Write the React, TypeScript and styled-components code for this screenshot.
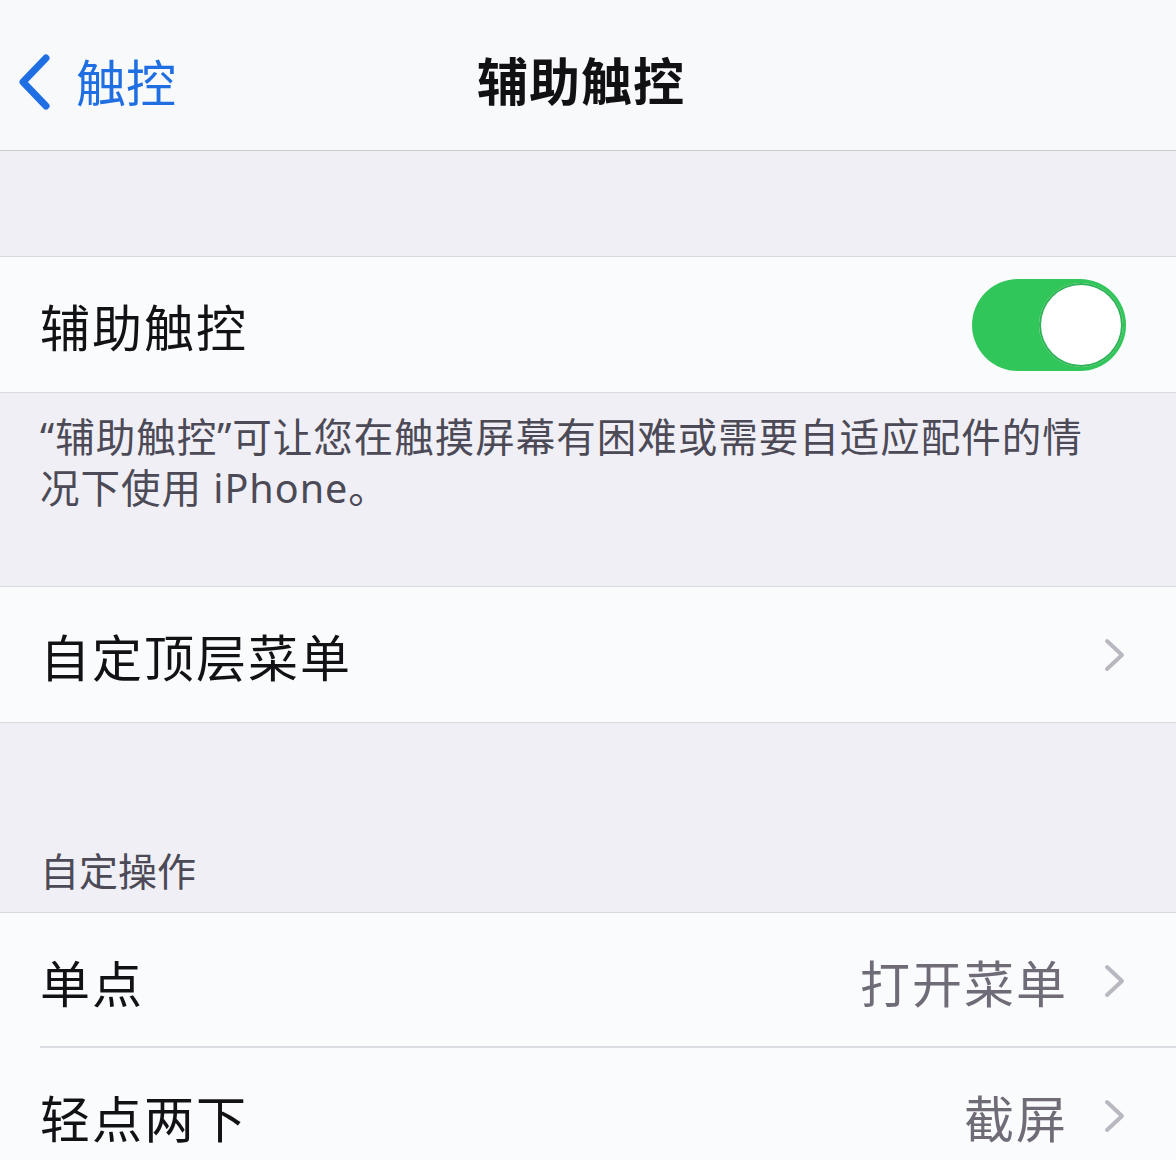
import styled, { createGlobalStyle } from 'styled-components';

const GlobalStyle = createGlobalStyle`
  html, body {
    margin: 0;
    padding: 0;
    background: #efeff5;
  }
  body {
    font-family: "Noto Sans CJK SC", "Noto Sans", sans-serif;
    -webkit-font-smoothing: antialiased;
  }
`;

const BackChevron = () => (
  <svg width="36" height="60" viewBox="0 0 36 60" fill="none">
    <path
      d="M30 6 L7 30 L30 54"
      stroke="#1f6fe3"
      strokeWidth="7"
      strokeLinecap="round"
      strokeLinejoin="round"
    />
  </svg>
);

const Chevron = () => (
  <svg width="22" height="34" viewBox="0 0 22 34" fill="none">
    <path
      d="M3 3 L18 17 L3 31"
      stroke="#b9b8c0"
      strokeWidth="4"
      strokeLinecap="round"
      strokeLinejoin="round"
    />
  </svg>
);

const Settings = () => {
  return (
    <Page>
      <GlobalStyle />
      <NavBar>
        <BackButton>
          <BackChevron />
          <span>触控</span>
        </BackButton>
        <NavTitle>辅助触控</NavTitle>
      </NavBar>

      <Spacer $height={105} />

      <Group>
        <Row>
          <RowLabel>辅助触控</RowLabel>
          <Toggle $on>
            <Knob />
          </Toggle>
        </Row>
      </Group>

      <Footer>
        “辅助触控”可让您在触摸屏幕有困难或需要自适应配件的情况下使用 iPhone。
      </Footer>

      <Group>
        <Row>
          <RowLabel>自定顶层菜单</RowLabel>
          <Accessory>
            <Chevron />
          </Accessory>
        </Row>
      </Group>

      <SectionHeader>自定操作</SectionHeader>

      <Group>
        <Row $divider>
          <RowLabel>单点</RowLabel>
          <Accessory>
            <RowValue>打开菜单</RowValue>
            <Chevron />
          </Accessory>
        </Row>
        <Row>
          <RowLabel>轻点两下</RowLabel>
          <Accessory>
            <RowValue>截屏</RowValue>
            <Chevron />
          </Accessory>
        </Row>
      </Group>
    </Page>
  );
};

const Page = styled.div`
  width: 1176px;
  height: 1160px;
  overflow: hidden;
  background: #efeff5;
  display: flex;
  flex-direction: column;
`;

const NavBar = styled.header`
  position: relative;
  flex: none;
  height: 150px;
  display: flex;
  align-items: center;
  justify-content: center;
  background: #f8f9fb;
  border-bottom: 1px solid #c9c9ce;
`;

const BackButton = styled.div`
  position: absolute;
  left: 16px;
  top: 52px;
  display: flex;
  align-items: center;
  gap: 24px;
  color: #1f6fe3;
  font-size: 50px;
  line-height: 60px;

  span {
    margin-top: -4px;
  }
`;

const NavTitle = styled.h1`
  margin: 8px 14px 0 0;
  font-size: 51px;
  font-weight: 700;
  color: #111114;
  letter-spacing: 1px;
`;

const Spacer = styled.div<{ $height: number }>`
  flex: none;
  height: ${({ $height }) => $height}px;
`;

const Group = styled.section`
  flex: none;
  background: #fafbfd;
  border-top: 1px solid #d9d9de;
  border-bottom: 1px solid #d9d9de;
`;

const Row = styled.div<{ $divider?: boolean }>`
  position: relative;
  height: 135px;
  padding: 0 50px 0 40px;
  display: flex;
  align-items: center;
  justify-content: space-between;

  &::after {
    content: '';
    display: ${({ $divider }) => ($divider ? 'block' : 'none')};
    position: absolute;
    left: 40px;
    right: 0;
    bottom: 0;
    height: 2px;
    background: #dcdce2;
  }
`;

const RowLabel = styled.span`
  font-size: 50px;
  color: #121216;
  letter-spacing: 2px;
`;

const Accessory = styled.div`
  display: flex;
  align-items: center;
  gap: 36px;
`;

const RowValue = styled.span`
  font-size: 50px;
  color: #6f6c78;
  letter-spacing: 2px;
`;

const Toggle = styled.div<{ $on?: boolean }>`
  width: 154px;
  height: 92px;
  border-radius: 46px;
  background: ${({ $on }) => ($on ? '#31c659' : '#e5e5ea')};
  display: flex;
  align-items: center;
  justify-content: ${({ $on }) => ($on ? 'flex-end' : 'flex-start')};
  padding: 0 3px;
  box-sizing: border-box;
`;

const Knob = styled.div`
  width: 84px;
  height: 84px;
  border-radius: 50%;
  background: #ffffff;
  box-shadow: 0 0 0 2px #2db356 inset;
`;

/* Latin face first so the curly quotes and "iPhone" stay narrow */
const Footer = styled.p`
  flex: none;
  margin: 0;
  height: 193px;
  box-sizing: border-box;
  padding: 19px 60px 0 40px;
  font-family: "Noto Sans", "Noto Sans CJK SC", sans-serif;
  font-size: 39.5px;
  line-height: 51px;
  letter-spacing: 1px;
  color: #4c4a56;
`;

const SectionHeader = styled.h2`
  flex: none;
  margin: 0;
  height: 189px;
  box-sizing: border-box;
  display: flex;
  align-items: flex-end;
  padding: 0 40px 18px;
  font-size: 39px;
  font-weight: 400;
  line-height: 50px;
  color: #4c4a56;
`;

export default Settings;
